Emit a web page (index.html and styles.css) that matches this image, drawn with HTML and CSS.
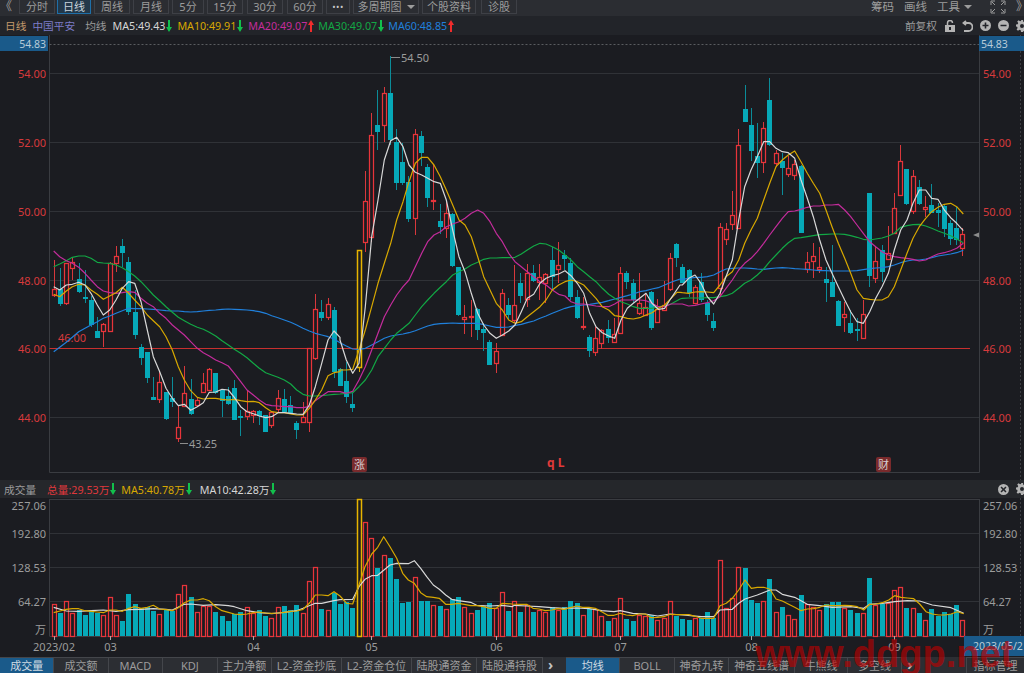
FILE: index.html
```html
<!DOCTYPE html>
<html lang="zh-CN">
  <head>
    <title>中国平安 日线</title>
    <meta charset="UTF-8" />
    <link rel="stylesheet" href="styles.css">
  </head>
  <body>
    <svg class="defs" width="0" height="0">
      <symbol id="arrow" viewBox="0 0 6 12"><path d="M2 0h2v7h2L3 12 0 7h2z" /></symbol>
      <symbol id="gear" viewBox="0 0 12 12"><path fill-rule="evenodd" d="M5 0h2l.3 1.7 1.2.5L10 1.2l1.4 1.4-1 1.4.5 1.2 1.7.3v2l-1.7.3-.5 1.2 1 1.4-1.4 1.4-1.5-1-1.2.5L7 12H5l-.3-1.7-1.2-.5-1.5 1L.6 9.4l1-1.4-.5-1.2L0 6.500v-2l1.700-.3.500-1.200-1-1.400L2.600.200l1.500 1 1.200-.5zM6 4a2 2 0 1 0 0 4 2 2 0 0 0 0-4z" /></symbol>
    </svg>

    <div class="toolbar">
      <span class="tool-icon back">《</span>
      <a class="tool w36">分时</a>
      <a class="tool w34 active nudge-back">日线</a>
      <a class="tool w36">周线</a>
      <a class="tool w36">月线</a>
      <a class="tool w32">5分</a>
      <a class="tool w36">15分</a>
      <a class="tool w36 nudge">30分</a>
      <a class="tool w36 nudge">60分</a>
      <a class="tool w24 dots">•••</a>
      <a class="tool w66">多周期图 <i class="caret"></i></a>
      <a class="tool w54">个股资料</a>
      <a class="tool w36 nudge-two">诊股</a>
      <span class="toolbar-right">
        <span class="plain">筹码</span>
        <span class="plain">画线</span>
        <span class="plain">工具 <i class="caret"></i></span>
        <svg class="expand" width="16" height="14" viewBox="0 0 16 14"><path d="M1 5V1h4M11 1h4v4M15 9v4h-4M5 13H1V9M2 2l3 3M14 2l-3 3M14 12l-3-3M2 12l3-3" /></svg>
        <span class="tool-icon forward">》</span>
      </span>
    </div>

    <div class="legend">
      <span class="period">日线</span>
      <span class="stock">中国平安</span>
      <span class="avg">均线</span>
      <span class="ma ma5">MA5:49.43<svg class="arrow down"><use href="#arrow" /></svg></span>
      <span class="ma ma10">MA10:49.91<svg class="arrow down"><use href="#arrow" /></svg></span>
      <span class="ma ma20">MA20:49.07<svg class="arrow up"><use href="#arrow" /></svg></span>
      <span class="ma ma30">MA30:49.07<svg class="arrow down"><use href="#arrow" /></svg></span>
      <span class="ma ma60">MA60:48.85<svg class="arrow up"><use href="#arrow" /></svg></span>
      <span class="legend-right">
        <span class="adjust">前复权</span>
        <svg class="icon" width="10" height="12" viewBox="0 0 10 12"><path fill-rule="evenodd" d="M0 5h10v7H0zM4 7v3h2V7z" /><path class="hollow" d="M2.500 5V3a2.500 2.500 0 0 1 5 0" /></svg>
        <svg class="icon" width="11" height="12" viewBox="0 0 11 12"><path class="hollow thick" d="M4 1L1.500 3 4 5M2 3h4.500a3.500 3.500 0 0 1 0 8H2" /></svg>
        <svg class="icon" width="11" height="11" viewBox="0 0 11 11"><path fill-rule="evenodd" d="M5.500 0a5.500 5.500 0 1 1 0 11 5.500 5.500 0 0 1 0-11zM4.700 2.500v2.200H2.500v1.600h2.200v2.200h1.600V6.300h2.200V4.700H6.300V2.500z" /></svg>
        <svg class="icon" width="11" height="11" viewBox="0 0 11 11"><path fill-rule="evenodd" d="M5.500 0a5.500 5.500 0 1 1 0 11 5.500 5.500 0 0 1 0-11zM2.500 4.700v1.600h6V4.700z" /></svg>
        <svg class="icon gear"><use href="#gear" /></svg>
      </span>
    </div>

    <svg id="priceChart" class="chart price-chart" viewBox="0 35 1024 445"></svg>

    <div class="legend vol-head">
      <span class="vol-title">成交量</span>
      <span class="ma total">总量:29.53万<svg class="arrow down"><use href="#arrow" /></svg></span>
      <span class="ma vol5">MA5:40.78万<svg class="arrow down"><use href="#arrow" /></svg></span>
      <span class="ma vol10">MA10:42.28万<svg class="arrow down"><use href="#arrow" /></svg></span>
      <span class="legend-right">
        <svg class="icon" width="11" height="11" viewBox="0 0 11 11"><path fill-rule="evenodd" d="M5.500 0a5.500 5.500 0 1 1 0 11 5.500 5.500 0 0 1 0-11zM3.600 2.500L2.500 3.600l1.900 1.900-1.900 1.900 1.100 1.100 1.900-1.900 1.900 1.900 1.100-1.100-1.900-1.900 1.900-1.900-1.100-1.100-1.900 1.900z" /></svg>
        <svg class="icon gear"><use href="#gear" /></svg>
      </span>
    </div>

    <svg id="volChart" class="chart vol-chart" viewBox="0 498 1024 159"></svg>

    <div class="tabs">
      <a class="tab std active">成交量</a>
      <a class="tab std">成交额</a>
      <a class="tab std">MACD</a>
      <a class="tab std">KDJ</a>
      <a class="tab std">主力净额</a>
      <a class="tab w70">L2-资金抄底</a>
      <a class="tab w70">L2-资金仓位</a>
      <a class="tab w65">陆股通资金</a>
      <a class="tab w66">陆股通持股</a>
      <span class="tab-next">&#x203A;</span>
      <a class="tab std active">均线</a>
      <a class="tab std">BOLL</a>
      <a class="tab std">神奇九转</a>
      <a class="tab w66">神奇五线谱</a>
      <a class="tab w53">牛熊线</a>
      <a class="tab w54">多空线</a>
      <span class="tab-next">&#x203A;</span>
      <a class="tab manage">指标管理</a>
    </div>

    <div class="watermark">www.ddgp.net</div>

    <script src="chart.js"></script>
  </body>
</html>
```

FILE: styles.css
```css
/* Reset */
* {
  margin: 0;
  padding: 0;
  box-sizing: border-box;
}

html,
body {
  width: 1024px;
  height: 673px;
  overflow: hidden;
}

body {
  position: relative;
  background-color: #1b1c21;
  color: #9c9c9c;
  font-family: "Noto Sans", "Noto Sans CJK SC", sans-serif;
  font-size: 11px;
}

.defs {
  position: absolute;
}

/* Top toolbar */
.toolbar {
  display: flex;
  align-items: flex-start;
  gap: 3px;
  height: 16px;
  background-color: #2b2d32;
  overflow: hidden;
}

.tool {
  display: flex;
  align-items: center;
  justify-content: center;
  gap: 5px;
  height: 14px;
  border: 1px solid #3e4046;
  border-top: none;
  color: #9c9c9c;
  line-height: 12px;
  white-space: nowrap;
}

.tool.active {
  border-color: #1f6fa8;
  background-color: #22384a;
  color: #c8d4dc;
}

.nudge-back { margin-left: -1px; }
.nudge { margin-left: 1px; }
.nudge-two { margin-left: 2px; }

.w24 { width: 24px; }
.w32 { width: 32px; }
.w34 { width: 34px; }
.w36 { width: 36px; }
.w53 { width: 53px; }
.w54 { width: 54px; }
.w65 { width: 65px; }
.w66 { width: 66px; }
.w70 { width: 70px; }

.dots {
  color: #c8c8c8;
  font-size: 9px;
  letter-spacing: 0.5px;
}

.tool-icon {
  width: 16px;
  color: #9c9c9c;
  font-size: 12px;
  line-height: 14px;
}

.caret {
  display: inline-block;
  border: 4px solid transparent;
  border-top-color: #9c9c9c;
  border-bottom: none;
}

.toolbar-right {
  display: flex;
  align-items: center;
  gap: 10px;
  height: 14px;
  margin-left: auto;
  margin-right: -8px;
  font-size: 11.5px;
  line-height: 14px;
}

.toolbar-right .plain {
  display: flex;
  align-items: center;
  gap: 4px;
  white-space: nowrap;
}

.expand {
  margin-left: 8px;
  fill: none;
  stroke: #9c9c9c;
}

/* Legend rows */
.legend {
  display: flex;
  align-items: center;
  height: 19px;
  padding-left: 5px;
  background-color: #222429;
  font-size: 10.7px;
  white-space: nowrap;
}

.period { color: #c49a6c; }
.stock { margin-left: 6px; color: #7c7cc8; }
.avg { margin-left: 10px; }

.ma {
  display: flex;
  align-items: center;
}

.ma5 { margin-left: 6px; color: #d6d6d6; }
.ma10 { margin-left: 5px; color: #d8a800; }
.ma20 { margin-left: 5px; color: #c42c9c; }
.ma30 { margin-left: 4px; color: #12a845; }
.ma60 { margin-left: 4px; color: #2080dc; }

.arrow {
  width: 6px;
  height: 12px;
  margin-left: 1px;
}

.arrow.down {
  fill: #12c04c;
}

.arrow.up {
  fill: #f02c2c;
  transform: scaleY(-1);
}

.legend-right {
  display: flex;
  align-items: center;
  gap: 7px;
  margin-left: auto;
}

.adjust {
  margin-right: 1px;
}

.icon {
  display: block;
  fill: #b4b4b4;
}

.icon.gear {
  width: 12px;
  height: 12px;
  margin-right: -4px;
}

.hollow {
  fill: none;
  stroke: #b4b4b4;
  stroke-width: 1.5;
}

.hollow.thick {
  stroke-width: 1.8;
}

/* Charts */
.chart {
  display: block;
  width: 1024px;
}

.price-chart {
  height: 445px;
}

.vol-chart {
  height: 159px;
}

.chart text {
  font-family: "Noto Sans", "Noto Sans CJK SC", sans-serif;
  font-size: 11px;
  fill: #9c9c9c;
}

.chart .price-label {
  fill: #d83a3c;
}

.chart .box-label {
  fill: #b8cbd8;
  font-size: 10.5px;
}

.chart .mark-text {
  fill: #d8d0d0;
}

.chart .ql {
  fill: #e03a3a;
  font-size: 12px;
  font-weight: bold;
}

.grid {
  stroke: #303237;
  stroke-width: 1;
}

.frame {
  stroke: #3a3c41;
  stroke-width: 1;
  fill: none;
}

.dash {
  stroke: #5a5c60;
  stroke-width: 1;
  stroke-dasharray: 2 2;
}

.dash-side {
  stroke: #3c3e43;
  stroke-dasharray: 2 2;
}

.level {
  stroke: #c8302f;
  stroke-width: 1;
}

.box {
  fill: #1a5a8a;
}

.badge {
  fill: #7a2a2c;
}

.note-line {
  stroke: #8c8c8c;
  fill: none;
}

.tick {
  stroke: #a8a8a8;
}

.pointer {
  fill: #8c8c8c;
}

/* Candles and bars */
.wick-up { stroke: #d8383c; }
.wick-down { stroke: #0b8c99; }
.wick-hot { stroke: #d8a800; }
.body-up { fill: #1b1c21; stroke: #e8343a; stroke-width: 1.25; }
.body-down { fill: #06a9b8; }
.body-hot { fill: #1b1c21; stroke: #e8b400; stroke-width: 1.5; }

.line {
  fill: none;
  stroke-width: 1.2;
  stroke-linejoin: round;
}

.line-ma5 { stroke: #d8d8d8; }
.line-ma10 { stroke: #d8a800; }
.line-ma20 { stroke: #c42c9c; }
.line-ma30 { stroke: #12a845; }
.line-ma60 { stroke: #2080dc; }

/* Volume header */
.vol-head {
  height: 18px;
  padding-left: 4px;
  background-color: #25272b;
}

.total { margin-left: 11px; color: #e0383c; }
.vol5 { margin-left: 5px; color: #d8a800; }
.vol10 { margin-left: 8px; color: #d6d6d6; }

/* Bottom tabs */
.tabs {
  display: flex;
  height: 16px;
  background-color: #2c2e33;
  white-space: nowrap;
  overflow: hidden;
}

.tab {
  display: flex;
  align-items: center;
  justify-content: center;
  flex-shrink: 0;
  border-right: 1px solid #44464b;
  border-top: 1px solid #44464b;
  color: #9c9c9c;
  line-height: 15px;
}

.tab.std {
  width: 54.4px;
}

.tab.active {
  background-color: #1a5a8a;
  color: #d0dae2;
}

.tab-next {
  width: 23px;
  padding-left: 5px;
  color: #c4c4c4;
  font-size: 14px;
  font-weight: bold;
  line-height: 16px;
}

.tab.manage {
  width: 58px;
  margin-left: auto;
  border-left: 1px solid #44464b;
  border-right: none;
}

/* Site watermark lying over the page */
.watermark {
  position: absolute;
  left: 755px;
  top: 635px;
  color: rgba(190, 0, 0, 0.65);
  font-family: "Liberation Sans", sans-serif;
  font-size: 38px;
  font-weight: bold;
  line-height: 38px;
  white-space: nowrap;
}
```

FILE: chart.js
```js
const SVG_NS = "http://www.w3.org/2000/svg";
const priceSvg = document.querySelector("#priceChart");
const volSvg = document.querySelector("#volChart");

const LEFT = 49.5;
const RIGHT = 979.5;
const barX = (i) => 53.6 + 6.225 * i;

// candles read off the picture at 3x: [high, top, bottom, low, kind]
// kind: u = up (hollow red), d = down (filled teal), h = limit up (gold)
const candleBlocks = [
  {
    off: 690,
    rows: [
      [90,178,195,200,"u"],[115,178,222,228,"d"],[100,100,218,225,"u"],[85,97,113,150,"u"],[100,148,185,188,"d"],
      [120,200,206,218,"d"],[198,210,285,290,"d"],[262,302,325,325,"d"],[280,283,303,352,"u"],[97,98,303,303,"u"],
      [48,78,100,125,"u"],[28,48,68,110,"d"],[80,97,245,255,"d"],[180,245,315,328,"d"],[342,350,383,405,"d"],
      [365,366,445,458,"d"],[440,502,510,510,"d"],[425,457,508,518,"u"],[487,487,568,570,"d"],[440,505,515,530,"d"],
      [527,590,623,637,"u"],[408,490,528,532,"u"],[448,508,553,555,"d"],[505,510,525,530,"u"],[430,458,485,490,"u"],
      [415,418,480,480,"u"],[428,428,490,492,"d"],[480,480,512,560,"d"],[470,498,522,525,"d"],[450,475,570,570,"d"],
      [540,558,565,618,"d"],[480,543,558,570,"u"],[540,543,556,580,"u"],[540,542,558,585,"d"],[555,556,605,606,"d"],
      [545,545,584,595,"u"],[480,503,538,545,"u"],[478,507,547,548,"d"],[498,526,552,552,"d"],[572,580,600,628,"d"],
      [515,562,575,580,"u"],[355,355,577,607,"u"],[192,238,385,390,"u"],[210,245,263,272,"d"],[205,222,262,270,"u"],
      [232,240,425,445,"d"],[415,418,468,468,"d"],[396,453,501,519,"d"],[489,522,534,546,"d"],[60,60,411,425,"h"],
    ],
  },
  {
    off: 150,
    rows: [
      [362,452,575,605,"u"],[190,256,560,575,"u"],[120,225,245,300,"d"],[112,130,225,275,"u"],[18,130,270,285,"d"],
      [238,275,400,420,"d"],[280,335,398,405,"d"],[378,395,507,515,"d"],[238,253,505,555,"u"],[243,258,310,348,"d"],
      [343,350,443,472,"d"],[345,449,453,480,"u"],[462,513,530,552,"d"],[455,490,535,565,"u"],[490,492,648,650,"d"],
      [650,652,795,798,"d"],[765,802,806,852,"u"],[750,797,802,862,"u"],[775,778,840,870,"d"],[820,836,848,903,"d"],
      [870,875,945,945,"d"],[880,902,940,970,"u"],[718,730,855,858,"u"],[745,765,795,808,"d"],[645,765,810,820,"u"],
      [668,698,738,760,"d"],[642,670,748,772,"u"],[645,670,692,695,"d"],[642,682,695,750,"u"],[670,673,700,760,"u"],
      [590,630,680,720,"d"],[575,645,658,700,"u"],[600,615,627,660,"d"],[625,640,742,750,"d"],[720,740,803,808,"d"],
      [740,829,832,840,"u"],[855,862,902,922,"d"],[830,863,905,918,"u"],[838,840,880,898,"u"],[810,836,865,880,"d"],
      [805,853,875,875,"u"],[652,670,850,852,"u"],[662,668,695,718,"d"],[688,700,750,760,"d"],[670,760,790,795,"u"],
      [730,770,795,795,"u"],[722,727,833,840,"d"],[748,778,815,815,"u"],[692,765,780,780,"u"],[610,625,718,722,"u"],
      [578,582,625,650,"d"],
    ],
  },
  {
    off: 210,
    rows: [
      [582,590,640,640,"d"],[598,600,670,680,"d"],[645,652,700,702,"u"],[608,635,690,695,"d"],[690,700,735,752,"d"],
      [730,753,773,782,"d"],[458,470,655,680,"u"],[460,478,508,525,"u"],[362,435,463,480,"u"],[178,224,475,478,"u"],
      [45,117,155,155,"d"],[113,165,243,272,"d"],[160,258,278,325,"d"],[155,173,277,308,"u"],[25,90,225,228,"d"],
      [240,248,280,290,"u"],[250,272,293,375,"d"],[258,293,313,322,"u"],[270,283,315,330,"u"],[285,288,488,490,"d"],
      [545,575,597,610,"u"],[518,558,573,625,"u"],[530,592,596,610,"u"],[590,628,638,695,"d"],[525,637,680,680,"d"],
      [690,692,767,768,"d"],[695,733,741,785,"u"],[720,760,790,792,"d"],[745,778,783,812,"d"],[690,733,804,805,"u"],
      [370,370,617,650,"d"],[530,572,625,640,"u"],[525,540,605,635,"d"],[468,548,567,570,"u"],[370,413,488,490,"u"],
      [225,272,376,378,"u"],[298,298,403,405,"d"],[300,317,422,432,"u"],[330,350,402,405,"d"],[378,411,418,442,"u"],
      [343,405,428,430,"d"],[400,420,428,472,"d"],[405,407,477,500,"d"],[450,460,508,525,"d"],[412,475,510,525,"d"],
      [475,493,535,557,"u"],
    ],
  },
];

// moving averages read off the same crops as x,y pairs at 3x, one group per crop
const crops = [
  { dx: 0, dy: 690 },
  { dx: 1020, dy: 150 },
  { dx: 2040, dy: 210 },
];

const maLines = {
  "line-ma60": [
    [161,365,179,352,199,337,217,322,236,305,255,295,273,285,292,275,310,265,329,258,348,250,367,242,386,235,404,236,423,236,442,237,460,238,479,240,498,242,517,243,535,243,553,245,572,246,592,245,610,243,628,241,647,240,666,238,685,237,703,238,722,239,741,240,760,242,778,245,797,250,815,257,834,263,853,270,872,277,890,285,909,295,928,303,946,310,965,315,984,320,1002,327,1020,338],
    [19,888,38,897,57,898,76,895,95,885,114,875,133,865,152,858,170,855,189,852,207,848,226,842,245,835,263,828,282,823,301,821,319,820,338,819,357,820,375,820,394,820,413,820,431,824,450,828,469,832,487,832,506,831,525,826,544,823,562,818,581,813,600,805,618,798,637,790,656,782,675,775,693,770,712,767,731,765,749,763,768,760,787,757,806,752,824,747,843,742,862,737,880,732,899,725,918,722,936,717,955,713,974,705,993,697,1020,687],
    [7,628,26,625,45,622,63,622,82,620,101,615,120,605,138,597,157,595,176,594,194,594,213,595,232,597,251,598,269,596,288,594,307,593,325,594,344,596,363,597,382,598,400,600,419,602,438,602,456,603,475,603,494,603,512,603,531,602,550,599,569,596,587,594,606,593,625,590,643,585,662,578,681,573,699,570,718,570,737,567,755,563,774,558,793,555,812,552,830,548,850,541],
  ],
  "line-ma30": [
    [161,110,179,102,199,92,217,82,236,78,255,78,273,85,292,97,310,99,329,100,348,105,367,113,386,125,404,138,423,155,442,175,460,195,479,212,498,230,517,247,535,262,553,272,572,283,592,292,610,298,628,307,647,318,666,332,685,345,703,358,722,370,741,383,760,400,778,415,797,428,815,435,834,442,853,450,872,462,890,480,909,493,928,498,946,498,965,497,984,495,1002,493,1020,492],
    [19,1030,38,1028,57,1010,76,990,95,960,114,920,133,895,152,870,170,850,189,835,207,820,226,795,245,770,263,750,282,730,301,712,319,695,338,675,357,665,375,657,394,645,413,637,431,628,450,624,469,624,487,623,506,623,525,622,544,612,562,600,581,588,600,580,618,582,637,590,656,600,675,615,693,630,712,650,731,665,749,680,768,695,787,715,806,733,824,745,843,755,862,762,880,770,899,775,918,775,936,775,955,770,974,768,993,762,1020,747],
    [7,685,26,684,45,684,63,684,82,683,101,683,120,680,138,677,157,670,176,655,194,640,213,630,232,615,251,597,269,575,288,555,307,535,325,518,344,505,363,503,382,500,400,497,419,494,438,493,456,492,475,492,494,493,512,497,531,502,550,508,569,510,587,507,606,504,625,498,643,490,662,472,681,467,699,464,718,463,737,468,755,475,774,483,793,490,812,497,830,507,850,518],
  ],
  "line-ma20": [
    [161,63,179,80,199,92,217,100,236,112,255,130,273,150,292,170,310,183,329,188,348,190,367,188,386,185,404,187,423,205,442,220,460,230,479,250,498,265,517,285,535,300,553,315,572,335,592,355,610,368,628,378,647,390,666,398,685,408,703,430,722,455,741,480,760,495,778,510,797,523,815,527,834,528,853,530,872,530,890,533,909,533,928,530,946,512,965,498,984,485,1002,485,1020,485],
    [19,1030,38,1024,57,990,76,950,95,900,114,850,133,800,152,765,170,735,189,710,207,690,226,650,245,610,263,575,282,555,301,545,319,530,338,522,357,515,375,505,394,490,413,480,431,490,450,515,469,550,487,575,506,610,525,635,544,650,562,665,581,680,600,695,618,705,637,720,656,733,675,738,693,755,712,762,731,762,749,765,768,768,787,770,806,770,824,762,843,750,862,750,880,750,899,750,918,752,936,760,955,770,974,770,993,762,1020,762],
    [7,702,26,708,45,706,63,702,82,698,101,692,120,680,138,655,157,630,176,600,194,580,213,565,232,545,251,520,269,495,288,470,307,445,325,425,344,423,363,418,382,412,400,408,419,408,438,405,456,405,475,403,494,420,512,440,531,465,550,490,569,515,587,530,606,545,625,555,643,560,662,563,681,565,699,568,718,573,737,570,755,560,774,552,793,548,812,542,830,535,850,520],
  ],
  "line-ma10": [
    [161,193,179,200,199,183,217,170,236,163,255,165,273,180,292,193,310,208,329,198,348,188,367,172,386,190,404,210,423,230,442,255,460,272,479,290,498,320,517,360,535,410,553,450,572,482,592,502,610,507,628,505,647,505,666,508,685,510,703,508,722,512,741,515,760,514,778,518,797,533,815,545,834,548,853,548,872,552,890,555,909,555,928,535,946,510,965,480,984,437,1002,428,1020,425],
    [0,960,19,960,38,958,57,900,76,840,95,770,114,700,133,640,152,580,170,510,189,455,207,395,226,340,245,322,263,322,282,345,301,380,319,420,338,465,357,510,375,525,394,560,413,620,431,680,450,720,469,760,487,780,506,810,525,820,544,815,562,800,581,785,600,770,618,750,637,720,656,705,675,695,693,690,712,695,731,705,749,725,768,745,787,770,806,780,824,797,843,800,862,805,880,807,899,803,918,795,936,788,955,775,974,765,993,745,1011,727,1020,727],
    [7,668,26,670,45,666,63,665,82,666,101,668,120,645,138,620,157,605,176,570,194,520,213,480,232,445,251,390,269,340,288,290,307,270,325,255,344,243,363,275,382,310,400,340,419,370,438,420,456,470,475,520,494,565,512,610,531,660,550,685,569,688,587,690,606,690,625,680,643,650,662,600,681,550,699,505,718,470,737,445,755,425,774,412,793,403,812,400,830,410,850,432],
  ],
  "line-ma5": [
    [161,170,179,180,199,165,217,163,236,157,255,165,273,190,292,225,310,255,329,240,348,210,367,175,386,155,404,160,423,215,442,300,460,380,479,425,498,475,517,505,535,527,553,523,572,541,592,530,610,518,628,487,647,486,666,478,685,480,703,502,722,530,741,545,760,551,778,558,797,563,815,560,834,548,853,548,872,550,890,552,909,553,928,525,946,470,965,400,984,330,1002,303,1020,322],
    [0,870,19,930,38,970,57,940,76,770,95,560,114,450,133,330,152,272,170,262,189,290,207,345,226,367,245,375,263,385,282,395,301,400,319,450,338,540,357,620,375,665,394,730,413,790,431,825,450,850,469,865,487,855,506,843,525,825,544,785,562,745,581,733,600,700,618,685,637,677,656,672,675,662,693,677,712,700,731,730,749,790,768,830,787,848,806,858,824,865,843,810,862,775,880,760,899,745,918,730,936,760,955,778,974,775,993,745,1020,705],
    [7,645,26,625,45,615,63,640,82,680,101,702,120,670,138,620,157,570,176,450,194,350,213,300,232,260,251,215,269,215,288,235,307,245,325,248,344,265,363,330,382,385,400,440,419,510,438,570,456,610,475,650,494,690,512,725,531,755,550,760,569,725,587,685,606,650,625,610,643,540,662,480,681,450,699,400,718,360,737,360,755,385,774,388,793,420,812,443,830,460,850,482],
  ],
};

// volume bars read at 3x: top of each bar, baseline is y 636
const volTops = [
  "u463","d490","u452","u488","d480","d495","d483","d490","u495","u440","u496","d512","d432","d463","d475","d470","d483","u492","d478","d483",
  "u432","u405","d442","u485","u468","u468","d485","d498","d512","d492","d485","u472","u488","d480","d498","u504","u472","d468","d480","d466",
  "u488","u392","u350","d477","u481","d428","d463","d456","d474","h148","u215","u263","d353","u316","d325","d388","d460","d455","u380","d453",
  "d453","u466","d468","u478","d447","d442","u472","u490","d480","d468","d458","u473","u425","d483",
  "u453","d487","u465","d487","u480","u485","d470","u480","d472","d453","d458","u495","d478","u478","u498","d513","u504","u445","d508","d513",
  "u495","u498","d495","u510","u503","u453","d497","d506","d511","u503","d505","d485","d505","u330","u475","u445","u352","d353","d450","d458",
  "u453","d388","u485","d472","u496","u508","d436","u462","u470","u480","d462","d455","d455","u474","d480","d490","u490","d383","u465","d463",
  "u460","u420","u410","d473","u475","d490","u511","d477","d497","d487","d493","d465","u509",
];

const volLines = {
  "line-ma5": [161,472,199,483,236,484,273,482,310,480,348,484,386,479,423,478,460,476,498,478,517,480,553,463,572,462,610,466,647,464,685,467,703,470,741,482,778,488,815,491,853,487,890,482,909,475,946,460,965,460,1002,452,1020,449,1058,448,1077,410,1095,388,1115,377,1133,376,1170,345,1190,340,1225,341,1243,332,1262,355,1280,380,1300,405,1318,418,1337,435,1355,448,1375,452,1412,457,1430,466,1470,468,1507,466,1536,470,1543,466,1580,468,1617,470,1655,473,1692,475,1730,474,1767,476,1805,482,1842,485,1861,482,1898,490,1936,492,1973,498,2010,492,2048,495,2104,500,2141,500,2160,480,2197,478,2216,460,2235,447,2272,435,2310,420,2328,420,2347,433,2384,442,2422,463,2459,467,2497,472,2553,470,2591,475,2609,463,2647,460,2684,455,2722,452,2759,453,2797,465,2853,473,2891,490],
  "line-ma10": [161,488,180,483,199,478,217,476,236,476,255,482,273,484,292,486,310,488,329,480,348,480,367,484,386,475,404,470,423,475,442,472,460,466,479,477,498,479,517,482,535,473,553,458,572,450,592,450,610,446,628,452,647,470,666,482,685,487,703,492,722,494,741,492,760,488,778,486,797,489,815,490,834,489,853,487,872,484,890,483,909,478,928,460,946,435,965,435,984,437,1002,425,1020,438,1040,460,1058,462,1077,405,1095,350,1115,312,1133,292,1151,260,1170,290,1190,325,1208,370,1225,390,1243,400,1262,428,1280,440,1300,442,1318,445,1337,463,1355,463,1375,460,1393,463,1412,467,1430,467,1450,470,1470,475,1489,475,1507,460,1536,462,1561,463,1580,463,1599,475,1617,477,1636,482,1655,480,1674,476,1692,478,1711,473,1730,468,1748,472,1767,472,1786,475,1805,485,1823,496,1842,496,1861,490,1879,495,1898,497,1917,492,1936,492,1954,503,1973,502,1992,500,2010,493,2029,494,2048,494,2067,494,2085,499,2104,505,2123,505,2141,505,2160,467,2179,460,2197,445,2216,420,2235,390,2254,415,2272,412,2291,412,2310,418,2328,447,2347,453,2366,463,2384,472,2403,482,2422,477,2441,476,2459,472,2478,465,2497,467,2516,467,2534,466,2553,467,2572,470,2591,480,2609,463,2628,462,2647,458,2666,450,2684,437,2703,442,2722,444,2741,446,2759,462,2778,485,2797,492,2816,495,2834,495,2853,492,2872,485,2891,491],
};

const el = (svg, name, attrs, text) => {
  const node = document.createElementNS(SVG_NS, name);
  for (const key in attrs) node.setAttribute(key, attrs[key]);
  if (text) node.textContent = text;
  svg.appendChild(node);
  return node;
};

const drawLine = (svg, x1, y1, x2, y2, cls) => el(svg, "line", { x1, y1, x2, y2, class: cls });

const toPoints = (list, dx, dy) => {
  const out = [];
  for (let i = 0; i < list.length; i += 2) {
    out.push(`${((list[i] + dx) / 3).toFixed(1)},${((list[i + 1] + dy) / 3).toFixed(1)}`);
  }
  return out;
};

const drawPriceChart = () => {
  const svg = priceSvg;
  // grid and frame
  [73.5, 142.5, 211.5, 280.5, 417.5].forEach((y) => drawLine(svg, LEFT, y, RIGHT, y, "grid"));
  drawLine(svg, LEFT, 35, LEFT, 472.5, "frame");
  drawLine(svg, RIGHT, 35, RIGHT, 472.5, "frame");
  drawLine(svg, LEFT, 472.5, RIGHT, 472.5, "frame");
  drawLine(svg, 1020.5, 35, 1020.5, 480, "dash-side");
  drawLine(svg, LEFT, 44.5, RIGHT, 44.5, "dash");
  drawLine(svg, LEFT, 348.5, 970, 348.5, "level");

  // current price boxes
  el(svg, "rect", { x: 0, y: 36, width: 48, height: 15, class: "box" });
  el(svg, "rect", { x: 979, y: 36, width: 45, height: 15, class: "box" });
  el(svg, "text", { x: 46, y: 48, "text-anchor": "end", class: "box-label" }, "54.83");
  el(svg, "text", { x: 981, y: 48, class: "box-label" }, "54.83");

  // price labels
  [["54.00", 78], ["52.00", 147], ["50.00", 216], ["48.00", 285], ["46.00", 353], ["44.00", 422]].forEach(([label, y]) => {
    el(svg, "text", { x: 46, y, "text-anchor": "end", class: "price-label" }, label);
    el(svg, "text", { x: 983, y, class: "price-label" }, label);
  });
  el(svg, "text", { x: 58, y: 342, class: "price-label" }, "46.00");

  // candles
  let i = 0;
  candleBlocks.forEach(({ off, rows }) => {
    rows.forEach(([hi, top, bottom, low, kind]) => {
      const cx = Math.round(barX(i)) + 0.5;
      const yHi = Math.round((hi + off) / 3);
      const yTop = Math.round((top + off) / 3);
      const yBottom = Math.round((bottom + off) / 3);
      const yLow = Math.round((low + off) / 3);
      const wick = kind === "u" ? "wick-up" : kind === "h" ? "wick-hot" : "wick-down";
      drawLine(svg, cx, yHi, cx, yLow, wick);
      if (kind === "d") {
        el(svg, "rect", { x: cx - 2.5, y: yTop, width: 5, height: Math.max(yBottom - yTop, 1), class: "body-down" });
      } else {
        el(svg, "rect", { x: cx - 2, y: yTop + 0.5, width: 4, height: Math.max(yBottom - yTop, 1), class: kind === "u" ? "body-up" : "body-hot" });
      }
      i++;
    });
  });

  // moving averages
  Object.keys(maLines).forEach((cls) => {
    const pts = maLines[cls].flatMap((list, k) => toPoints(list, crops[k].dx, crops[k].dy));
    el(svg, "polyline", { points: pts.join(" "), class: `line ${cls}` });
  });

  // high and low notes
  drawLine(svg, 391, 57.5, 400, 57.5, "note-line");
  el(svg, "text", { x: 401, y: 62 }, "54.50");
  drawLine(svg, 180, 443.5, 188, 443.5, "note-line");
  el(svg, "text", { x: 189, y: 448 }, "43.25");

  // event badges
  el(svg, "rect", { x: 352, y: 457, width: 15, height: 15, rx: 2, class: "badge" });
  el(svg, "text", { x: 354, y: 469, class: "mark-text" }, "涨");
  el(svg, "text", { x: 547, y: 467, class: "ql" }, "q L");
  el(svg, "rect", { x: 876, y: 457, width: 15, height: 15, rx: 2, class: "badge" });
  el(svg, "text", { x: 878, y: 469, class: "mark-text" }, "财");

  el(svg, "polygon", { points: "973,235 979,232.500 979,237.500", class: "pointer" });
};

const drawVolChart = () => {
  const svg = volSvg;
  [533.5, 567.5, 601.5].forEach((y) => drawLine(svg, LEFT, y, RIGHT, y, "grid"));
  drawLine(svg, LEFT, 499.5, RIGHT, 499.5, "frame");
  drawLine(svg, LEFT, 499, LEFT, 636, "frame");
  drawLine(svg, RIGHT, 499, RIGHT, 636, "frame");
  drawLine(svg, LEFT, 636.5, RIGHT, 636.5, "frame");
  drawLine(svg, 1020.5, 498, 1020.5, 636, "dash-side");

  [["257.06", 510], ["192.80", 538], ["128.53", 572], ["64.27", 606], ["万", 634]].forEach(([label, y]) => {
    el(svg, "text", { x: 46, y, "text-anchor": "end" }, label);
    el(svg, "text", { x: 983, y }, label);
  });

  volTops.forEach((item, i) => {
    const kind = item[0];
    const top = Math.round((+item.slice(1) + 1350) / 3);
    const cx = Math.round(barX(i));
    if (kind === "d") {
      el(svg, "rect", { x: cx - 2, y: top, width: 5, height: 636 - top, class: "body-down" });
    } else {
      el(svg, "rect", { x: cx - 1.5, y: top + 0.5, width: 4, height: 636 - top, class: kind === "u" ? "body-up" : "body-hot" });
    }
  });

  Object.keys(volLines).forEach((cls) => {
    el(svg, "polyline", { points: toPoints(volLines[cls], 0, 1350).join(" "), class: `line ${cls}` });
  });

  // month axis
  [["2023/02", 0], ["03", 9], ["04", 32], ["05", 51], ["06", 71], ["07", 91], ["08", 112], ["09", 135]].forEach(([label, i]) => {
    const cx = Math.round(barX(i)) + 0.5;
    drawLine(svg, cx, 636, cx, 640, "tick");
    el(svg, "text", { x: label.length > 2 ? 54 : cx, y: 651, "text-anchor": "middle" }, label);
  });

  el(svg, "rect", { x: 964, y: 636, width: 60, height: 20, class: "box" });
  el(svg, "text", { x: 973, y: 650, class: "box-label" }, "2023/05/2");
};

drawPriceChart();
drawVolChart();
```
